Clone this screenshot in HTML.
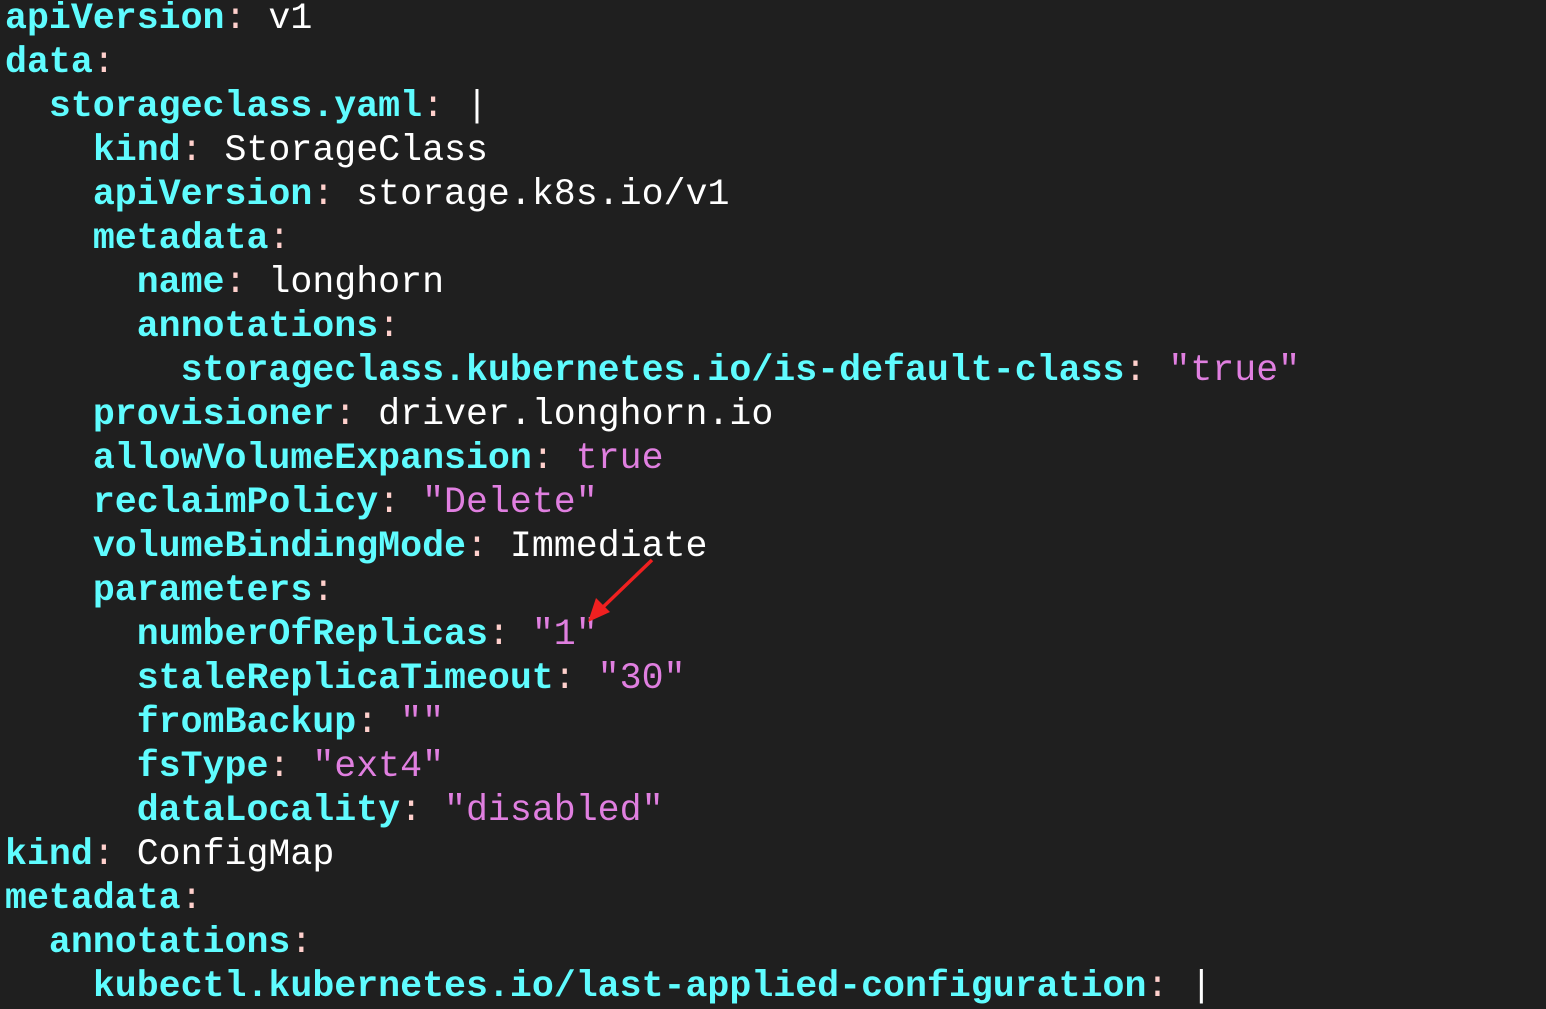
<!DOCTYPE html>
<html><head><meta charset="utf-8"><style>
html,body{margin:0;padding:0;background:#1f1f1f;width:1546px;height:1008px;overflow:hidden}
pre{position:absolute;left:5px;top:-3px;margin:0;font-family:"Liberation Mono",monospace;font-size:36.6px;line-height:44px;color:#ffffff;letter-spacing:0}
.k{color:#5ffcff;font-weight:bold}
.c{color:#ffd0cc}
.s{color:#e07fe0}
</style></head><body>
<pre><span class="k">apiVersion</span><span class="c">:</span> v1
<span class="k">data</span><span class="c">:</span>
  <span class="k">storageclass.yaml</span><span class="c">:</span> |
    <span class="k">kind</span><span class="c">:</span> StorageClass
    <span class="k">apiVersion</span><span class="c">:</span> storage.k8s.io/v1
    <span class="k">metadata</span><span class="c">:</span>
      <span class="k">name</span><span class="c">:</span> longhorn
      <span class="k">annotations</span><span class="c">:</span>
        <span class="k">storageclass.kubernetes.io/is-default-class</span><span class="c">:</span> <span class="s">"true"</span>
    <span class="k">provisioner</span><span class="c">:</span> driver.longhorn.io
    <span class="k">allowVolumeExpansion</span><span class="c">:</span> <span class="s">true</span>
    <span class="k">reclaimPolicy</span><span class="c">:</span> <span class="s">"Delete"</span>
    <span class="k">volumeBindingMode</span><span class="c">:</span> Immediate
    <span class="k">parameters</span><span class="c">:</span>
      <span class="k">numberOfReplicas</span><span class="c">:</span> <span class="s">"1"</span>
      <span class="k">staleReplicaTimeout</span><span class="c">:</span> <span class="s">"30"</span>
      <span class="k">fromBackup</span><span class="c">:</span> <span class="s">""</span>
      <span class="k">fsType</span><span class="c">:</span> <span class="s">"ext4"</span>
      <span class="k">dataLocality</span><span class="c">:</span> <span class="s">"disabled"</span>
<span class="k">kind</span><span class="c">:</span> ConfigMap
<span class="k">metadata</span><span class="c">:</span>
  <span class="k">annotations</span><span class="c">:</span>
    <span class="k">kubectl.kubernetes.io/last-applied-configuration</span><span class="c">:</span> |</pre>
<svg style="position:absolute;left:0;top:0" width="1546" height="1008">
<line x1="652" y1="560" x2="600" y2="610" stroke="#f02020" stroke-width="3.5"/>
<polygon points="588,622 596,598 610,612" fill="#f02020"/>
</svg>
</body></html>
